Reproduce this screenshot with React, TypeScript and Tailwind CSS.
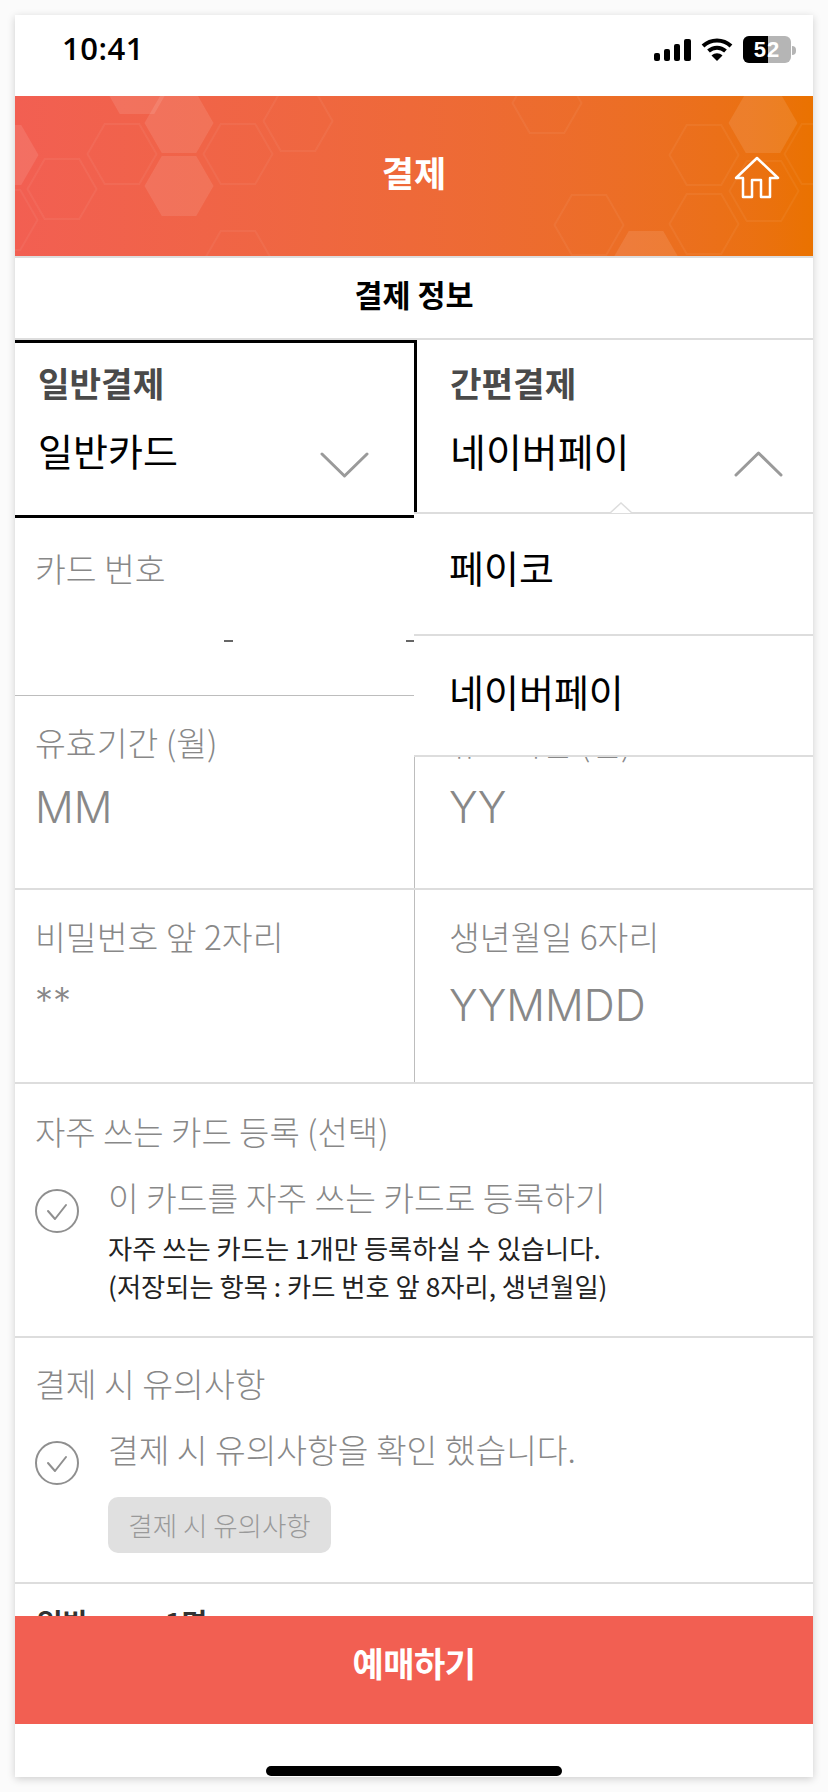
const font = { fontFamily: "'Noto Sans CJK KR', 'Noto Sans', sans-serif" };

const filledHexes = [
  [122, 84],
  [164, 123],
  [164, 186],
  [-11, 155],
  [748, 123],
  [631, 261],
];

const outlineHexes = [
  [107, 154],
  [223, 154],
  [283, 121],
  [47, 189],
  [-12, 220],
  [223, 261],
  [532, 103],
  [689, 155],
  [749, 191],
  [804, 154],
  [574, 225],
  [689, 224],
];

function hexPoints(cx: number, cy: number) {
  const r = 34.5;
  const h = 30;
  return `${cx - r},${cy} ${cx - r / 2},${cy - h} ${cx + r / 2},${cy - h} ${cx + r},${cy} ${cx + r / 2},${cy + h} ${cx - r / 2},${cy + h}`;
}

function HeaderPattern() {
  return (
    <svg className="absolute inset-0" width="798" height="160" viewBox="0 96 798 160">
      {filledHexes.map(([x, y]) => (
        <polygon key={`${x}-${y}`} points={hexPoints(x, y)} fill="#ffffff" fillOpacity="0.1" />
      ))}
      {outlineHexes.map(([x, y]) => (
        <polygon key={`${x}-${y}`} points={hexPoints(x, y)} fill="none" stroke="#ffffff" strokeOpacity="0.05" strokeWidth="2" />
      ))}
    </svg>
  );
}

function StatusBar() {
  return (
    <div className="h-[81px] flex justify-between pl-[47px] pr-[17px] pt-[15px]">
      <span className="text-[31px] leading-[36px] font-semibold text-black tracking-[0.5px]" style={{ fontFamily: "'Open Sans', sans-serif" }}>
        10:41
      </span>
      <div className="flex items-start gap-[10px] pt-[7px]">
        <svg width="37" height="24" viewBox="0 0 37 24" className="mt-[1px]">
          <rect x="0" y="15" width="6" height="8" rx="2" fill="#000" />
          <rect x="10" y="11" width="6" height="12" rx="2" fill="#000" />
          <rect x="20" y="6" width="6" height="17" rx="2" fill="#000" />
          <rect x="30" y="1" width="7" height="22" rx="2" fill="#000" />
        </svg>
        <svg width="32" height="24" viewBox="0 0 32 24">
          <path d="M2 9C10 1.500 22 1.500 30 9" fill="none" stroke="#000" strokeWidth="4" />
          <path d="M7.500 14C12.500 9.500 19.500 9.500 24.500 14" fill="none" stroke="#000" strokeWidth="4" />
          <path d="M16 24L10.500 18.500C14 15.500 18 15.500 21.500 18.500Z" fill="#000" />
        </svg>
        <div className="flex items-center">
          <div className="relative w-[48px] h-[27px] rounded-[6px] overflow-hidden bg-[#b5b5b5] -mt-[1px] flex">
            <div className="w-[25px] h-full bg-black" />
            <span
              className="absolute inset-0 flex items-center justify-center text-[22px] font-bold text-white tracking-[1px]"
              style={{ fontFamily: "'Liberation Sans', sans-serif" }}
            >
              52
            </span>
          </div>
          <div className="w-[4px] h-[9px] ml-[1px] rounded-r-full bg-[#b5b5b5]" />
        </div>
      </div>
    </div>
  );
}

function Header() {
  return (
    <div className="relative h-[160px] bg-gradient-to-r from-[#f25f52] to-[#ea7200] overflow-hidden flex items-center justify-center">
      <HeaderPattern />
      <span className="relative text-[35px] font-bold text-white -mt-[7px]">결제</span>
      <svg className="absolute right-[33px] top-[60px]" width="46" height="44" viewBox="0 0 46 44" fill="none" stroke="#ffffff" strokeWidth="2.500" strokeLinejoin="round">
        <path d="M23 2L44 22H36V41H27V24H18V41H9V22H2Z" />
      </svg>
    </div>
  );
}

function Chevron({ up, className }: { up?: boolean; className: string }) {
  return (
    <svg className={`absolute ${className}`} width="49" height="26" viewBox="0 0 49 26" fill="none" stroke="#9a9a9a" strokeWidth="3" strokeLinecap="round" strokeLinejoin="round">
      <path d={up ? "M2 24L24.500 2L47 24" : "M2 2L24.500 24L47 2"} />
    </svg>
  );
}

function PayTab({ title, value, active, open }: { title: string; value: string; active?: boolean; open?: boolean }) {
  return (
    <div
      className={`relative h-[178px] ${
        active ? "w-[402px] shrink-0 border-y-[3px] border-r-[3px] border-black pl-[23px] pt-[15px]" : "flex-1 pl-[33px] pt-[18px]"
      }`}
    >
      <p className="text-[34.3px] leading-[48px] font-bold text-[#4a4a4a]">{title}</p>
      <p className={`leading-[56px] mt-[16px] text-black ${open ? "text-[39px]" : "text-[38px]"}`}>{value}</p>
      {open ? <Chevron up className="right-[30px] top-[111px]" /> : <Chevron className="right-[45px] top-[109px]" />}
    </div>
  );
}

function Field({ label, value, valueClass, left }: { label: string; value: string; valueClass: string; left?: boolean }) {
  return (
    <div className={`h-[192px] pt-[22px] ${left ? "w-[400px] shrink-0 pl-[20px] border-r border-[#bdbdbd]" : "flex-1 pl-[34px]"}`}>
      <p className="text-[33.5px] leading-[48px] font-light text-[#888888]">{label}</p>
      <p className={`text-[#888888] ${valueClass}`} style={{ fontFamily: "Inter, sans-serif", fontWeight: 300 }}>
        {value}
      </p>
    </div>
  );
}

function Check({ className }: { className: string }) {
  return (
    <svg width="44" height="44" viewBox="0 0 44 44" fill="none" stroke="#8f8f8f" className={`shrink-0 ${className}`}>
      <circle cx="22" cy="22" r="21" strokeWidth="2" />
      <path d="M13 22L20 30L31 16" strokeWidth="2" strokeLinecap="round" strokeLinejoin="round" />
    </svg>
  );
}

function Dropdown() {
  return (
    <div className="absolute left-[399px] right-0 top-[497px] h-[245px] bg-white border-y-2 border-[#dddddd]">
      <svg className="absolute left-[195px] -top-[12px]" width="24" height="11" viewBox="0 0 24 11" fill="#ffffff" stroke="#dddddd" strokeWidth="1.500">
        <path d="M1 11L12 1L23 11" />
      </svg>
      <div className="h-[122px] flex items-center pl-[35px] pb-[16px] border-b-2 border-[#dddddd] text-[38px] text-black">페이코</div>
      <div className="h-[119px] flex items-center pl-[35px] pb-[10px] text-[38px] text-black">네이버페이</div>
    </div>
  );
}

export default function App() {
  return (
    <div className="h-[1792px] bg-[#fbfbfb] px-[15px] pt-[15px]" style={font}>
      <div className="relative h-[1762px] bg-white overflow-hidden shadow-[0_2px_8px_rgba(0,0,0,0.18)]">
        <StatusBar />
        <Header />
        <div className="h-[84px] pb-[7px] flex items-center justify-center border-y-2 border-[#dddddd] text-[30.5px] font-bold text-black">
          결제 정보
        </div>
        <div className="flex">
          <PayTab title="일반결제" value="일반카드" active />
          <PayTab title="간편결제" value="네이버페이" open />
        </div>
        <div className="h-[178px] pl-[20px] pt-[26px] border-b border-[#bdbdbd] relative">
          <p className="text-[33.5px] leading-[48px] font-light text-[#888888]">카드 번호</p>
          <span className="absolute left-[209px] top-[122px] w-[9px] h-[2px] bg-[#666666]" />
          <span className="absolute left-[391px] top-[122px] w-[9px] h-[2px] bg-[#666666]" />
        </div>
        <div className="flex border-b-2 border-[#dddddd]">
          <Field left label="유효기간 (월)" value="MM" valueClass="text-[43px] leading-[60px] mt-[11px]" />
          <Field label="유효기간 (년)" value="YY" valueClass="text-[43px] leading-[60px] mt-[11px]" />
        </div>
        <div className="flex border-b-2 border-[#dddddd]">
          <Field left label="비밀번호 앞 2자리" value="**" valueClass="text-[36px] leading-[50px] mt-[15px]" />
          <Field label="생년월일 6자리" value="YYMMDD" valueClass="text-[43px] leading-[60px] mt-[15px]" />
        </div>
        <div className="h-[254px] pl-[20px] pt-[24px] border-b-2 border-[#dddddd]">
          <p className="text-[33px] leading-[46px] font-light text-[#888888]">자주 쓰는 카드 등록 (선택)</p>
          <div className="flex gap-[29px] mt-[20px]">
            <Check className="mt-[15px]" />
            <div>
              <p className="text-[33.4px] leading-[46px] font-light text-[#888888]">이 카드를 자주 쓰는 카드로 등록하기</p>
              <p className="text-[26.3px] leading-[38px] mt-[9px] text-[#222222]">
                자주 쓰는 카드는 1개만 등록하실 수 있습니다.
                <br />
                (저장되는 항목 : 카드 번호 앞 8자리, 생년월일)
              </p>
            </div>
          </div>
        </div>
        <div className="h-[246px] pl-[20px] pt-[22px] border-b-2 border-[#dddddd]">
          <p className="text-[33.5px] leading-[46px] font-light text-[#888888]">결제 시 유의사항</p>
          <div className="flex gap-[29px] mt-[20px]">
            <Check className="mt-[15px]" />
            <div>
              <p className="text-[33.4px] leading-[46px] font-light text-[#888888]">결제 시 유의사항을 확인 했습니다.</p>
              <div className="mt-[25px] w-[223px] h-[56px] rounded-[10px] bg-[#e0e0e0] flex items-center justify-center text-[26.5px] font-light text-[#999999]">
                결제 시 유의사항
              </div>
            </div>
          </div>
        </div>
        <div className="flex pl-[22px] pt-[18px] text-[28px] leading-[40px] font-bold text-[#333333]">
          <span className="w-[128px]">일반</span>
          <span>1명</span>
        </div>
        <Dropdown />
        <div className="absolute left-0 right-0 top-[1601px] h-[108px] pb-[16px] bg-[#f25f52] flex items-center justify-center text-[34px] font-bold text-white -tracking-[0.5px]">
          예매하기
        </div>
        <div className="absolute left-[251px] top-[1751px] w-[296px] h-[10px] rounded-full bg-black" />
      </div>
    </div>
  );
}
